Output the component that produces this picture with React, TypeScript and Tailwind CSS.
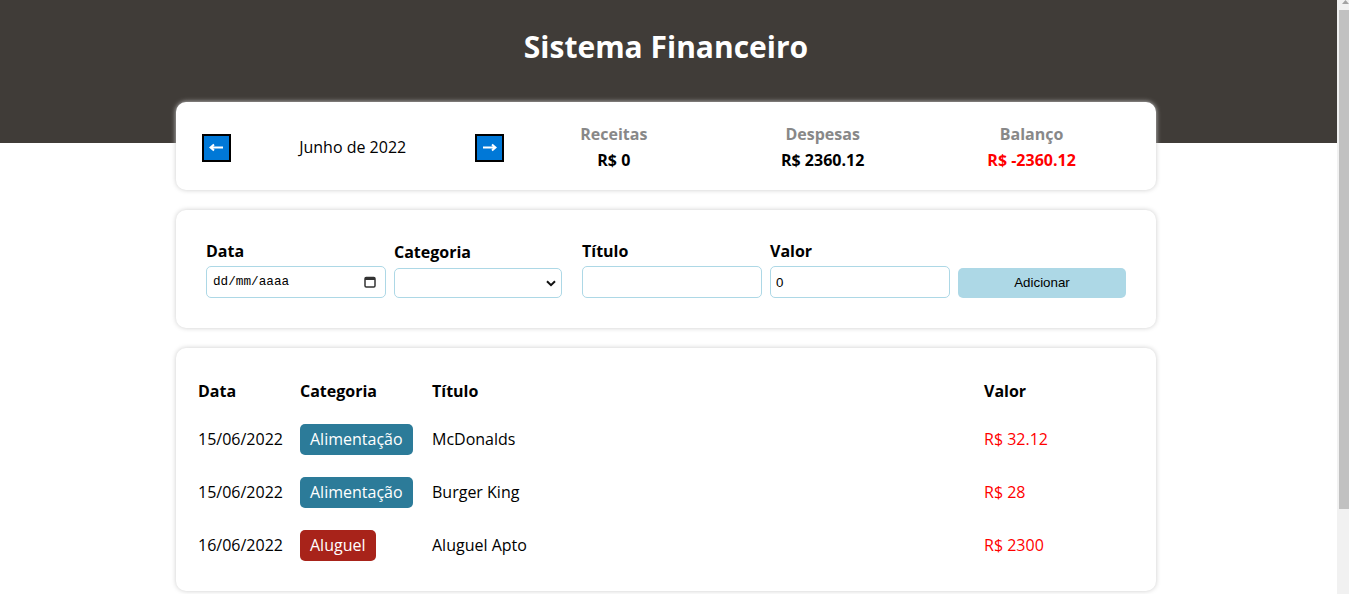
import React from "react";

const font = { fontFamily: '"Open Sans", "Noto Sans", sans-serif' };

function ArrowBtn({ dir }: { dir: "left" | "right" }) {
  return (
    <div className="w-10 flex justify-center">
      <button className="w-[29px] h-[28px] bg-[#0078d7] border-2 border-black flex items-center justify-center">
        <svg width="15" height="9" viewBox="0 0 15 9">
          {dir === "left" ? (
            <path d="M14 4.5H2M5 1.5L1.5 4.5L5 7.5" stroke="white" strokeWidth="2" fill="none" />
          ) : (
            <path d="M1 4.5H13M10 1.5L13.5 4.5L10 7.5" stroke="white" strokeWidth="2" fill="none" />
          )}
        </svg>
      </button>
    </div>
  );
}

function Resume({ title, value, red }: { title: string; value: string; red?: boolean }) {
  return (
    <div className="flex-1 text-center">
      <div className="font-bold text-[#888] text-[16px] leading-[21px] mb-[5px]">{title}</div>
      <div className={"font-bold text-[16px] leading-[21px] " + (red ? "text-[#ff0000]" : "text-black")}>{value}</div>
    </div>
  );
}

const rows = [
  { date: "15/06/2022", cat: "Alimentação", color: "bg-[#2c7b99]", title: "McDonalds", value: "R$ 32.12" },
  { date: "15/06/2022", cat: "Alimentação", color: "bg-[#2c7b99]", title: "Burger King", value: "R$ 28" },
  { date: "16/06/2022", cat: "Aluguel", color: "bg-[#a8231a]", title: "Aluguel Apto", value: "R$ 2300" },
];

export default function App() {
  return (
    <div style={font} className="h-[594px] overflow-hidden flex bg-white text-black">
      <div className="flex-1 min-w-0">
        <div className="h-[143px] bg-[#403c38] text-center pr-[5px]">
          <h1 className="text-white font-bold text-[30px] leading-[40px] pt-[27px] m-0">Sistema Financeiro</h1>
        </div>
        <div className="pr-[5px]">
          <div className="max-w-[980px] mx-auto">
            {/* Info area */}
            <div className="mt-[-41px] bg-white rounded-[10px] shadow-[0_0_5px_#ccc] pt-[22px] pb-[19px] px-5 flex items-center">
              <div className="flex-1 flex items-center">
                <ArrowBtn dir="left" />
                <div className="flex-1 text-center text-[16px] leading-[21px]">Junho de 2022</div>
                <ArrowBtn dir="right" />
              </div>
              <div className="flex-[2] flex">
                <Resume title="Receitas" value="R$ 0" />
                <Resume title="Despesas" value="R$ 2360.12" />
                <Resume title="Balanço" value="R$ -2360.12" red />
              </div>
            </div>

            {/* Input area */}
            <div className="mt-5 bg-white rounded-[10px] shadow-[0_0_5px_#ccc] pt-[21px] pb-5 grid grid-cols-5 gap-5 px-[30px]">
              <label className="my-2.5 block min-w-0">
                <div className="font-bold text-[16px] leading-[21px] mb-[4px]">Data</div>
                <div className="w-[180px] h-[32px] border border-[#add8e6] rounded-[5px] flex items-center justify-between pl-[6px] pr-[9px] bg-white">
                  <span className="text-[12.7px] text-black" style={{ fontFamily: '"Liberation Mono", monospace' }}>dd/mm/aaaa</span>
                  <svg width="12" height="12" viewBox="0 0 12 12">
                    <rect x="1" y="1.5" width="10" height="9.5" rx="1.2" fill="none" stroke="#333" strokeWidth="1.5" />
                    <rect x="1" y="1.5" width="10" height="2.5" fill="#333" />
                  </svg>
                </div>
              </label>
              <label className="my-2.5 block min-w-0">
                <div className="font-bold text-[16px] leading-[21px] mb-[5px] mt-[1px]">Categoria</div>
                <div className="relative w-full h-[30px]">
                  <select className="appearance-none w-full h-[30px] border border-[#add8e6] rounded-[5px] bg-white px-[5px] text-[13.33px]">
                    <option value=""></option>
                    <option>Alimentação</option>
                    <option>Aluguel</option>
                    <option>Salário</option>
                  </select>
                  <svg className="absolute right-[6px] top-[12px] pointer-events-none" width="10" height="7" viewBox="0 0 10 7">
                    <path d="M1 1.2L5 5.2L9 1.2" stroke="#111" strokeWidth="2" fill="none" />
                  </svg>
                </div>
              </label>
              <label className="my-2.5 block min-w-0">
                <div className="font-bold text-[16px] leading-[21px] mb-[4px]">Título</div>
                <input className="w-[180px] h-[32px] border border-[#add8e6] rounded-[5px] px-[5px] text-[13.33px] outline-none" style={{ fontFamily: '"Liberation Sans", Arial, sans-serif' }} />
              </label>
              <label className="my-2.5 block min-w-0">
                <div className="font-bold text-[16px] leading-[21px] mb-[4px]">Valor</div>
                <input className="w-[180px] h-[32px] border border-[#add8e6] rounded-[5px] px-[5px] text-[13.33px] outline-none" style={{ fontFamily: '"Liberation Sans", Arial, sans-serif' }} defaultValue="0" />
              </label>
              <label className="my-2.5 block min-w-0">
                <div className="text-[16px] leading-[21px] mb-[6px]">&nbsp;</div>
                <button className="w-full h-[30px] bg-[#add8e6] rounded-[5px] text-[13.33px] text-black" style={{ fontFamily: '"Liberation Sans", Arial, sans-serif' }}>Adicionar</button>
              </label>
            </div>

            {/* Table area */}
            <div className="mt-5 bg-white rounded-[10px] shadow-[0_0_5px_#ccc] pt-[21px] pb-[18px] px-5">
              <table className="w-full border-separate border-spacing-0.5 text-[16px] leading-[21px]">
                <thead>
                  <tr>
                    <th className="w-[100px] text-left py-2.5 font-bold">Data</th>
                    <th className="w-[130px] text-left py-2.5 font-bold">Categoria</th>
                    <th className="text-left py-2.5 font-bold">Título</th>
                    <th className="w-[150px] text-left py-2.5 font-bold">Valor</th>
                  </tr>
                </thead>
                <tbody>
                  {rows.map((r, i) => (
                    <tr key={i}>
                      <td className="py-2.5">{r.date}</td>
                      <td className="py-2.5">
                        <span className={"inline-block px-2.5 py-[5px] rounded-[5px] text-white " + r.color}>{r.cat}</span>
                      </td>
                      <td className="py-2.5">{r.title}</td>
                      <td className="py-2.5 text-[#ff0000]">{r.value}</td>
                    </tr>
                  ))}
                </tbody>
              </table>
            </div>
          </div>
        </div>
      </div>
      {/* Browser scrollbar */}
      <div className="w-[12px] shrink-0 bg-[#f1f1f1] flex flex-col">
        <div className="h-[10px] flex justify-start pl-[5px]">
          <svg width="7" height="4" viewBox="0 0 7 4">
            <path d="M3.5 0L7 4H0Z" fill="#a3a3a3" />
          </svg>
        </div>
        <div className="ml-[2px] h-[499px] bg-[#c1c1c1]" />
      </div>
    </div>
  );
}
